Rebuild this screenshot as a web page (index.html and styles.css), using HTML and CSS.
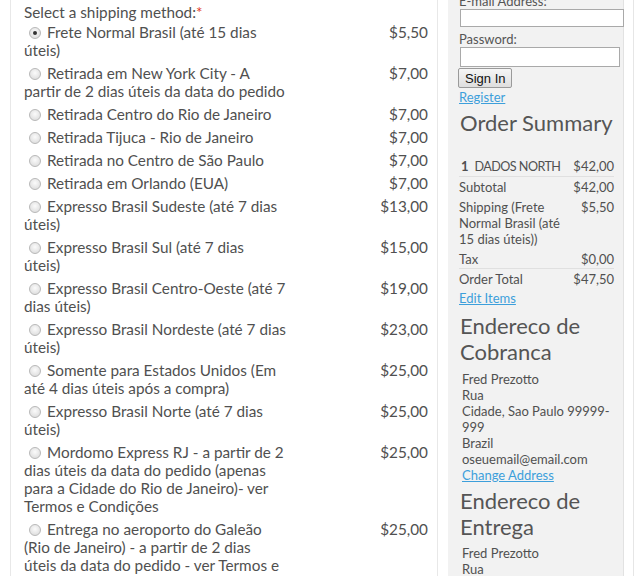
FILE: index.html
```html
<!DOCTYPE html>
<html>
<head>
<meta charset="utf-8">
<link rel="stylesheet" href="styles.css">
</head>
<body>
<div class="page">
  <div class="main">
    <div class="ship-title">Select a shipping method:<span class="req">*</span></div>
    <div class="opts">
      <div class="opt"><div class="lbl"><span class="radio on"></span>Frete Normal Brasil (até 15 dias úteis)</div><div class="price">$5,50</div></div>
      <div class="opt"><div class="lbl"><span class="radio"></span>Retirada em New York City - A partir de 2 dias úteis da data do pedido</div><div class="price">$7,00</div></div>
      <div class="opt"><div class="lbl"><span class="radio"></span>Retirada Centro do Rio de Janeiro</div><div class="price">$7,00</div></div>
      <div class="opt"><div class="lbl"><span class="radio"></span>Retirada Tijuca - Rio de Janeiro</div><div class="price">$7,00</div></div>
      <div class="opt"><div class="lbl"><span class="radio"></span>Retirada no Centro de São Paulo</div><div class="price">$7,00</div></div>
      <div class="opt"><div class="lbl"><span class="radio"></span>Retirada em Orlando (EUA)</div><div class="price">$7,00</div></div>
      <div class="opt"><div class="lbl"><span class="radio"></span>Expresso Brasil Sudeste (até 7 dias úteis)</div><div class="price">$13,00</div></div>
      <div class="opt"><div class="lbl"><span class="radio"></span>Expresso Brasil Sul (até 7 dias<br>úteis)</div><div class="price">$15,00</div></div>
      <div class="opt"><div class="lbl"><span class="radio"></span>Expresso Brasil Centro-Oeste (até 7 dias úteis)</div><div class="price">$19,00</div></div>
      <div class="opt"><div class="lbl"><span class="radio"></span>Expresso Brasil Nordeste (até 7 dias úteis)</div><div class="price">$23,00</div></div>
      <div class="opt"><div class="lbl"><span class="radio"></span>Somente para Estados Unidos (Em até 4 dias úteis após a compra)</div><div class="price">$25,00</div></div>
      <div class="opt"><div class="lbl"><span class="radio"></span>Expresso Brasil Norte (até 7 dias úteis)</div><div class="price">$25,00</div></div>
      <div class="opt"><div class="lbl"><span class="radio"></span>Mordomo Express RJ - a partir de 2 dias úteis da data do pedido (apenas para a Cidade do Rio de Janeiro)- ver Termos e Condições</div><div class="price">$25,00</div></div>
      <div class="opt"><div class="lbl"><span class="radio"></span>Entrega no aeroporto do Galeão (Rio de Janeiro) - a partir de 2 dias úteis da data do pedido - ver Termos e Condições</div><div class="price">$25,00</div></div>
    </div>
  </div>
  <div class="side">
    <div class="field-lbl">E-mail Address:</div>
    <input class="inp inp-email" type="text">
    <div class="field-lbl pw">Password:</div>
    <input class="inp inp-pw" type="password">
    <button class="btn">Sign In</button>
    <a class="link reg" href="#">Register</a>
    <h2 class="h">Order Summary</h2>
    <div class="sum">
      <div class="row sep"><span><b class="qty">1</b><span class="item">DADOS NORTH</span></span><span>$42,00</span></div>
      <div class="row"><span>Subtotal</span><span>$42,00</span></div>
      <div class="row"><span class="wrapcell">Shipping (Frete Normal Brasil (até 15 dias úteis))</span><span>$5,50</span></div>
      <div class="row sep"><span>Tax</span><span>$0,00</span></div>
      <div class="row"><span>Order Total</span><span>$47,50</span></div>
    </div>
    <a class="link edit" href="#">Edit Items</a>
    <h2 class="h addr-h">Endereco de Cobranca</h2>
    <div class="addr">
      <div>Fred Prezotto</div>
      <div>Rua</div>
      <div>Cidade, Sao Paulo 99999-999</div>
      <div>Brazil</div>
      <div>oseuemail@email.com</div>
      <a class="link" href="#">Change Address</a>
    </div>
    <h2 class="h addr-h2">Endereco de Entrega</h2>
    <div class="addr addr2">
      <div>Fred Prezotto</div>
      <div>Rua</div>
      <div>Cidade, Sao Paulo 99999-999</div>
    </div>
  </div>
  <div class="rail"></div>
</div>
</body>
</html>
```

FILE: styles.css
```css
html, body {
  margin: 0;
  padding: 0;
  background: #fff;
  overflow: hidden;
}
body {
  font-family: Lato, "Open Sans", sans-serif;
  color: #505050;
}
.page {
  display: flex;
  align-items: flex-start;
}
.main {
  margin-left: 10px;
  width: 413px;
  padding: 3px 0 0 13px;
  border-left: 1px solid #e8e8e8;
  border-right: 1px solid #e8e8e8;
  min-height: 700px;
  font-size: 15.3px;
  line-height: 18px;
}
.ship-title {
  line-height: 18px;
  margin-bottom: 2px;
}
.req { color: #e03a2a; }
.opt {
  display: grid;
  grid-template-columns: 262px 1fr;
  margin-bottom: 5px;
}
.lbl { line-height: 18px; }
.price {
  text-align: right;
  padding-right: 9px;
}
.radio {
  display: inline-block;
  width: 10px;
  height: 10px;
  border: 1px solid #b8b8b8;
  border-radius: 50%;
  background: radial-gradient(circle at 50% 40%, #fbfbfb 0, #e0e0e0 75%);
  margin: 0 6px 0 5px;
  vertical-align: -1px;
  position: relative;
  box-sizing: content-box;
}
.radio.on::after {
  content: "";
  position: absolute;
  left: 3px;
  top: 3px;
  width: 4px;
  height: 4px;
  border-radius: 50%;
  background: #333;
}
.side {
  margin: -7px 0 0 10px;
  width: 164px;
  padding: 0 0 0 11px;
  background: #f2f2f2;
  border-right: 1px solid #e2e2e2;
  min-height: 700px;
  font-size: 13px;
  line-height: 16px;
}
.field-lbl { color: #555; }
.field-lbl.pw { margin-top: 4px; }
.inp {
  display: block;
  box-sizing: border-box;
  margin: 0 0 0 1px;
  padding: 0;
  border: 1px solid #a9a9a9;
  background: #fff;
}
.inp-email { width: 164px; height: 18px; }
.inp-pw { width: 160px; height: 20px; }
.btn {
  display: block;
  margin: 1px 0 0 -1px;
  height: 20px;
  padding: 0 6px;
  font-family: "Liberation Sans", Arial, sans-serif;
  font-size: 13px;
  color: #111;
  border: 1px solid #9a9a9a;
  border-radius: 2px;
  background: linear-gradient(#f6f6f6, #dedede);
}
.link {
  color: #3d9fdb;
  text-decoration: underline;
  display: block;
}
.reg { margin-top: 1px; }
.h {
  font-size: 22px;
  font-weight: normal;
  color: #555;
  margin: 5px 0 0 1px;
  line-height: 26px;
}
.sum {
  margin-top: 20px;
  width: 155px;
}
.row {
  display: flex;
  justify-content: space-between;
  padding: 2px 0;
  line-height: 16px;
}
.row.sep {
  border-bottom: 1px solid #e0e0e0;
  padding-bottom: 1px;
}
.wrapcell { width: 110px; }
.qty { font-weight: bold; margin: 0 6px 0 2px; }
.item { font-size: 12.6px; letter-spacing: -0.55px; }
.edit { margin-top: 1px; }
.addr-h { margin-top: 7px; }
.addr-h2 { margin-top: 5px; }
.addr {
  padding-left: 3px;
  margin-top: 6px;
}
.addr2 { margin-top: 5px; }
.rail {
  margin-left: 9px;
  width: 1px;
  background: #e6e6e6;
  min-height: 700px;
}
```
